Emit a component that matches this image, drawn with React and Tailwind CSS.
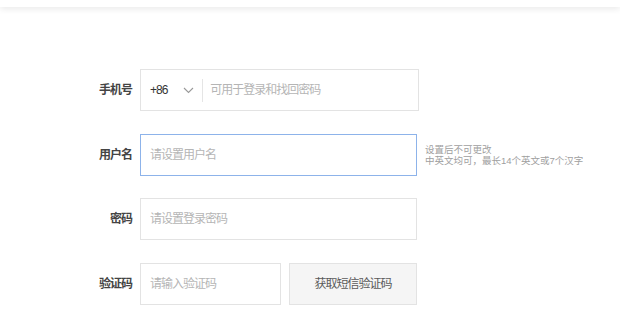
import { useState } from "react";

const font = { fontFamily: '"Liberation Sans", "Noto Sans CJK SC", sans-serif' };

function Label({ children }) {
  return (
    <div className="w-[140px] shrink-0 pr-[8px] text-right text-[12px] font-bold text-[#444] tracking-[-1px]">
      {children}
    </div>
  );
}

export default function App() {
  const [phone, setPhone] = useState("");
  const [name, setName] = useState("");
  const [pwd, setPwd] = useState("");
  const [code, setCode] = useState("");

  return (
    <div className="w-[620px] h-[309px] bg-white overflow-hidden" style={font}>
      {/* top bar */}
      <div className="h-[7px] bg-white shadow-[0_2px_6px_rgba(0,0,0,0.09)]" />

      <form className="flex flex-col gap-[22.5px] pt-[62px]">
        {/* phone */}
        <div className="flex items-center">
          <Label>手机号</Label>
          <div className="flex items-center w-[279px] h-[42px] border border-[#e3e3e3] bg-white">
            <span className="ml-[9px] text-[12px] text-[#333] tracking-[-1px]">+86</span>
            <svg width="11" height="7" viewBox="0 0 11 7" className="ml-[16px]">
              <path d="M1 1l4.5 4.5L10 1" fill="none" stroke="#999" strokeWidth="1.1" />
            </svg>
            <span className="ml-[8px] w-px h-[23px] bg-[#e5e5e5]" />
            <input
              value={phone}
              onChange={(e) => setPhone(e.target.value)}
              placeholder="可用于登录和找回密码"
              className="ml-[7px] flex-1 min-w-0 outline-none text-[12px] tracking-[-1px] text-[#333] placeholder-[#b5b5b5]"
            />
          </div>
        </div>

        {/* username */}
        <div className="flex items-center">
          <Label>用户名</Label>
          <input
            value={name}
            onChange={(e) => setName(e.target.value)}
            placeholder="请设置用户名"
            className="w-[277px] h-[42px] border border-[#8db3ea] px-[9px] outline-none text-[12px] tracking-[-1px] text-[#333] placeholder-[#b5b5b5]"
          />
          <div className="ml-[8px] pt-[1px] text-[9.5px] leading-[11px] text-[#a0a0a0]">
            <div>设置后不可更改</div>
            <div>中英文均可，最长14个英文或7个汉字</div>
          </div>
        </div>

        {/* password */}
        <div className="flex items-center">
          <Label>密码</Label>
          <input
            type="password"
            value={pwd}
            onChange={(e) => setPwd(e.target.value)}
            placeholder="请设置登录密码"
            className="w-[277px] h-[42px] border border-[#e3e3e3] px-[9px] outline-none text-[12px] tracking-[-1px] text-[#333] placeholder-[#b5b5b5]"
          />
        </div>

        {/* sms code */}
        <div className="flex items-center">
          <Label>验证码</Label>
          <input
            value={code}
            onChange={(e) => setCode(e.target.value)}
            placeholder="请输入验证码"
            className="w-[141px] h-[42px] border border-[#e3e3e3] px-[9px] outline-none text-[12px] tracking-[-1px] text-[#333] placeholder-[#b5b5b5]"
          />
          <button
            type="button"
            className="ml-[8px] w-[128px] h-[42px] border border-[#e3e3e3] bg-[#f5f5f5] text-[12px] tracking-[-1px] text-[#5a5a5a]"
          >
            获取短信验证码
          </button>
        </div>
      </form>
    </div>
  );
}
